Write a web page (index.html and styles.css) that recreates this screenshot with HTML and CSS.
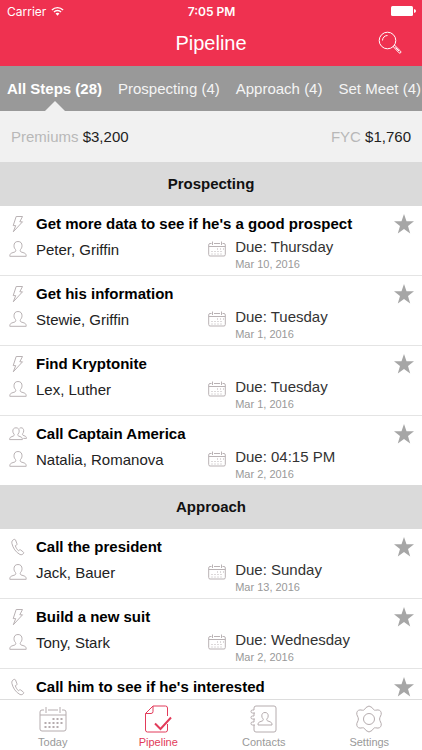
FILE: index.html
```html
<!DOCTYPE html>
<html lang="en">
<head>
    <meta charset="UTF-8">
    <meta name="viewport" content="width=device-width, initial-scale=1.0">
    <title>Pipeline</title>
    <link rel="stylesheet" href="styles.css">
</head>
<body>
    <svg class="icon-defs" aria-hidden="true">
        <symbol id="bolt" viewBox="0 0 18 18">
            <path d="M7.200 1.500h6.300l-2.700 5.300h2.700L4.300 16.800l2.400-6.200H4.200z"/>
        </symbol>
        <symbol id="person" viewBox="0 0 18 18">
            <path d="M9 1.500c-2.800 0-4 1.800-4 4.200 0 1.700.6 2.900 1.500 3.800.5.700.4 2-.5 2.400L2.700 13C1.200 13.500.8 14.700.8 16.300h16.400c0-1.600-.4-2.800-1.900-3.300L12 11.900c-.9-.4-1-1.700-.5-2.400.9-.9 1.500-2.100 1.500-3.800 0-2.400-1.200-4.200-4-4.200z"/>
        </symbol>
        <symbol id="people" viewBox="0 0 18 18">
            <path d="M7 2.800c-2.200 0-3.200 1.400-3.200 3.300 0 1.300.5 2.300 1.200 3 .5.700.3 1.500-.4 1.800L2 12C.9 12.500.6 13.400.6 14.600h12.800c0-1.200-.3-2.100-1.400-2.600l-2.600-1.100c-.7-.3-.9-1.100-.4-1.800.7-.7 1.200-1.700 1.200-3C10.200 4.200 9.200 2.800 7 2.800z"/>
            <path d="M10.500 3.300c.4-.3.900-.5 1.500-.5 1.900 0 2.700 1.300 2.700 3 0 1.200-.4 2.100-1 2.800-.5.700-.3 1.300.3 1.600l2.200 1c1 .4 1.300 1.200 1.300 2.200h-3.200"/>
        </symbol>
        <symbol id="phone" viewBox="0 0 18 18">
            <path d="M4.800 1.500C3.200 2.300 2.500 3.600 2.900 5.400c1 4.600 4 9 8.100 11.100 1.500.6 2.800.1 3.600-1.300.2-.4.100-.8-.2-1.100l-2.800-2.200c-.4-.3-.9-.2-1.200.1l-.9.800C8.200 11.600 7 9.900 6.300 7.700l1.200-.6c.4-.2.6-.7.500-1.200L6.500 1.900c-.3-.6-1-.7-1.700-.4z"/>
        </symbol>
        <symbol id="calendar" viewBox="0 0 28 26">
            <path d="M5 4H3Q1 4 1 6v17q0 2 2 2h22q2 0 2-2V6q0-2-2-2h-2M9 4h10M1 9h26M7 1v6M21 1v6"/>
            <path class="big-dots" d="M13.500 13h10.500M5.500 17h18.500M5.500 21h15"/>
        </symbol>
        <symbol id="small-calendar" viewBox="0 0 18 18">
            <path d="M3.500 3.500H2Q.7 3.500.7 5v9.500Q.7 16 2 16h14q1.300 0 1.300-1.500V5q0-1.500-1.300-1.500h-1.500M6 3.500h6M.7 6.500h16.600M4.500 1.500V5M13.500 1.500V5"/>
            <path class="dots" d="M9 9h7M3.500 11.500h12M3.500 14h10"/>
        </symbol>
        <symbol id="star" viewBox="0 0 20 20">
            <path d="M10 0l2.500 7.300h7.500l-6 4.700 2.200 7.600L10 15.100l-6.200 4.500L6 12 0 7.300h7.500z"/>
        </symbol>
        <symbol id="search" viewBox="0 0 24 24">
            <circle cx="9.500" cy="9.500" r="8.300"/>
            <path d="M4.500 9.500a5 5 0 0 1 5-5M15.300 15.700l1.400-1.400 5.900 5.900q.8.800 0 1.600t-1.600 0zM17.500 16.500l3.600 3.600"/>
        </symbol>
        <symbol id="pipeline" viewBox="0 0 28 28">
            <path d="M23.500 11V3q0-2-2-2H9L1.500 8.500V25q0 2 2 2h18q2 0 2-2v-6M9 1v5.500q0 2-2 2H1.500"/>
            <path class="check" d="M11 18.500l5.500 5.500L27 12.500"/>
        </symbol>
        <symbol id="contacts" viewBox="0 0 28 28">
            <path d="M4 5V3q0-2 2-2h18q2 0 2 2v22q0 2-2 2H6q-2 0-2-2v-2M4 8v3M4 14v3M4 20v1M4 5H2.500a1.500 1.500 0 0 0 0 3H5M4 11H2.500a1.500 1.500 0 0 0 0 3H5M4 17H2.500a1.500 1.500 0 0 0 0 3H5M4 21v2"/>
            <path d="M15 7.500c-2.300 0-3.200 1.500-3.200 3.400 0 1.300.5 2.300 1.300 3 .4.700.2 1.600-.6 1.900l-3 1.200c-1.200.5-1.500 1.500-1.500 3h14c0-1.500-.3-2.500-1.500-3l-3-1.200c-.8-.3-1-1.200-.6-1.900.8-.7 1.300-1.700 1.300-3 0-1.900-.9-3.400-3.200-3.400z"/>
        </symbol>
        <symbol id="settings" viewBox="0 0 28 28">
            <path d="M11 2.500Q14-.5 17 2.500l1.500 2q.8.900 2 .7l2.500-.3q3.700.5 3.200 4.600l-1.300 3q-.6 1.500 0 3l1.300 3q.5 4.100-3.200 4.600l-2.500-.3q-1.200-.2-2 .7l-1.500 2q-3 3-6 0l-1.500-2q-.8-.9-2-.7L5 23.100q-3.700-.5-3.200-4.600l1.300-3q.6-1.500 0-3l-1.300-3Q1.300 5.400 5 4.900l2.500.3q1.200.2 2-.7z"/>
            <circle cx="14" cy="14" r="5.500"/>
        </symbol>
    </svg>

    <header class="header">
        <div class="status-bar">
            <div class="carrier">
                <span>Carrier</span>
                <svg class="wifi" viewBox="0 0 14 10" aria-hidden="true">
                    <path d="M1 3.800a8.500 8.500 0 0 1 12 0M3.200 6a5.400 5.400 0 0 1 7.600 0"/>
                    <path class="wifi-dot" d="M7 10L4.900 7.800a3 3 0 0 1 4.200 0z"/>
                </svg>
            </div>
            <span class="clock">7:05 PM</span>
            <svg class="battery" viewBox="0 0 25 10" aria-hidden="true">
                <rect width="22" height="10" rx="1.500"/>
                <path d="M23 3q2 .5 2 2t-2 2z"/>
            </svg>
        </div>
        <div class="title-bar">
            <h1>Pipeline</h1>
            <button class="search-btn" type="button" aria-label="Search"><svg><use href="#search"/></svg></button>
        </div>
    </header>

    <nav class="steps">
        <a class="step active" href="#all">All Steps (28)</a>
        <a class="step" href="#prospecting">Prospecting (4)</a>
        <a class="step" href="#approach">Approach (4)</a>
        <a class="step" href="#set-meet">Set Meet (4)</a>
    </nav>

    <div class="summary">
        <div><span class="summary-label">Premiums</span> $3,200</div>
        <div><span class="summary-label">FYC</span> $1,760</div>
    </div>

    <main class="list">
        <section id="prospecting">
            <h2>Prospecting</h2>
            <article class="task">
                <svg class="icon"><use href="#bolt"/></svg>
                <h3>Get more data to see if he's a good prospect</h3>
                <button class="star-btn" type="button" aria-label="Star"><svg><use href="#star"/></svg></button>
                <svg class="icon"><use href="#person"/></svg>
                <div class="contact">Peter, Griffin</div>
                <svg class="icon"><use href="#small-calendar"/></svg>
                <div class="due">Due: Thursday<time>Mar 10, 2016</time></div>
            </article>
            <article class="task">
                <svg class="icon"><use href="#bolt"/></svg>
                <h3>Get his information</h3>
                <button class="star-btn" type="button" aria-label="Star"><svg><use href="#star"/></svg></button>
                <svg class="icon"><use href="#person"/></svg>
                <div class="contact">Stewie, Griffin</div>
                <svg class="icon"><use href="#small-calendar"/></svg>
                <div class="due">Due: Tuesday<time>Mar 1, 2016</time></div>
            </article>
            <article class="task">
                <svg class="icon"><use href="#bolt"/></svg>
                <h3>Find Kryptonite</h3>
                <button class="star-btn" type="button" aria-label="Star"><svg><use href="#star"/></svg></button>
                <svg class="icon"><use href="#person"/></svg>
                <div class="contact">Lex, Luther</div>
                <svg class="icon"><use href="#small-calendar"/></svg>
                <div class="due">Due: Tuesday<time>Mar 1, 2016</time></div>
            </article>
            <article class="task">
                <svg class="icon"><use href="#people"/></svg>
                <h3>Call Captain America</h3>
                <button class="star-btn" type="button" aria-label="Star"><svg><use href="#star"/></svg></button>
                <svg class="icon"><use href="#person"/></svg>
                <div class="contact">Natalia, Romanova</div>
                <svg class="icon"><use href="#small-calendar"/></svg>
                <div class="due">Due: 04:15 PM<time>Mar 2, 2016</time></div>
            </article>
        </section>
        <section id="approach">
            <h2>Approach</h2>
            <article class="task">
                <svg class="icon"><use href="#phone"/></svg>
                <h3>Call the president</h3>
                <button class="star-btn" type="button" aria-label="Star"><svg><use href="#star"/></svg></button>
                <svg class="icon"><use href="#person"/></svg>
                <div class="contact">Jack, Bauer</div>
                <svg class="icon"><use href="#small-calendar"/></svg>
                <div class="due">Due: Sunday<time>Mar 13, 2016</time></div>
            </article>
            <article class="task">
                <svg class="icon"><use href="#bolt"/></svg>
                <h3>Build a new suit</h3>
                <button class="star-btn" type="button" aria-label="Star"><svg><use href="#star"/></svg></button>
                <svg class="icon"><use href="#person"/></svg>
                <div class="contact">Tony, Stark</div>
                <svg class="icon"><use href="#small-calendar"/></svg>
                <div class="due">Due: Wednesday<time>Mar 2, 2016</time></div>
            </article>
            <article class="task">
                <svg class="icon"><use href="#phone"/></svg>
                <h3>Call him to see if he's interested</h3>
                <button class="star-btn" type="button" aria-label="Star"><svg><use href="#star"/></svg></button>
            </article>
        </section>
    </main>

    <nav class="tab-bar">
        <a class="tab" href="#today"><svg><use href="#calendar"/></svg>Today</a>
        <a class="tab active" href="#pipeline-tab"><svg><use href="#pipeline"/></svg>Pipeline</a>
        <a class="tab" href="#contacts-tab"><svg><use href="#contacts"/></svg>Contacts</a>
        <a class="tab" href="#settings-tab"><svg><use href="#settings"/></svg>Settings</a>
    </nav>
</body>
</html>
```

FILE: styles.css
```css
* {
    box-sizing: border-box;
}
body {
    margin: 0;
    height: 100vh;
    display: flex;
    flex-direction: column;
    overflow: hidden;
    font-family: "Liberation Sans", Arial, sans-serif;
    font-size: 15px;
    color: #222;
    background-color: #fff;
}
h1, h2, h3 {
    margin: 0;
}
a {
    text-decoration: none;
}
button {
    padding: 0;
    border: none;
    background: none;
    cursor: pointer;
}
svg {
    display: block;
    fill: none;
    stroke: currentColor;
}
.icon-defs {
    position: absolute;
    width: 0;
    height: 0;
}
.dots {
    stroke-dasharray: 1 2;
}
.big-dots {
    stroke-width: 2;
    stroke-dasharray: 2 2;
}
.header {
    flex: none;
    background-color: #ef3150;
    color: white;
}
.status-bar {
    display: grid;
    grid-template-columns: 1fr auto 1fr;
    align-items: center;
    height: 22px;
    padding: 0 6px 0 7px;
    font-family: Inter, "Liberation Sans", sans-serif;
    font-size: 12px;
}
.carrier {
    display: flex;
    align-items: center;
    gap: 5px;
}
.wifi {
    width: 13px;
    height: 10px;
    stroke-width: 1.5;
}
.wifi-dot {
    fill: currentColor;
    stroke: none;
}
.clock {
    font-weight: 600;
}
.battery {
    width: 25px;
    height: 10px;
    justify-self: end;
    fill: currentColor;
    stroke: none;
}
.title-bar {
    display: grid;
    grid-template-columns: 1fr auto 1fr;
    align-items: center;
    height: 44px;
    padding: 0 20px;
    padding-bottom: 2px;
}
.title-bar h1 {
    grid-column: 2;
    font-size: 20px;
    font-weight: 300;
}
.search-btn {
    justify-self: end;
    color: white;
}
.search-btn svg {
    width: 24px;
    height: 24px;
}
.steps {
    flex: none;
    display: flex;
    gap: 16px;
    height: 45px;
    padding-left: 7px;
    overflow: hidden;
    line-height: 45px;
    background-color: #999;
}
.step {
    flex: none;
    position: relative;
    color: #f4f4f4;
}
.step.active {
    font-weight: bold;
    color: white;
}
.step.active::after {
    content: "";
    position: absolute;
    left: 50%;
    bottom: 0;
    transform: translateX(-50%);
    border: 10px solid transparent;
    border-top: none;
    border-bottom-color: #f1f1f1;
}
.summary {
    flex: none;
    display: flex;
    justify-content: space-between;
    height: 51px;
    padding: 0 11px;
    line-height: 51px;
    background-color: #f1f1f1;
}
.summary-label {
    color: #b8b8b8;
}
.list {
    flex: 1;
    min-height: 0;
    overflow: auto;
    scrollbar-width: none;
}
.list h2 {
    font-size: 15px;
    line-height: 44px;
    text-align: center;
    color: #111;
    background-color: #dadada;
}
.task {
    display: grid;
    grid-template-columns: 18px 1fr 18px 37% 20px;
    grid-template-rows: 20px 36px;
    column-gap: 9px;
    padding: 8px 8px 5px 9px;
    border-bottom: 1px solid #e4e4e4;
}
.task:last-child {
    border-bottom: none;
}
.task h3 {
    grid-column: 2 / 5;
    font-size: 15px;
    line-height: 20px;
    white-space: nowrap;
    color: #000;
}
.icon {
    width: 18px;
    height: 18px;
    color: #b9b2b4;
}
.icon:first-child {
    margin-top: 1px;
}
.contact, .due {
    white-space: nowrap;
}
.contact {
    line-height: 32px;
}
.icon:not(:first-child) {
    margin-top: 6px;
}
.due {
    grid-column: 4 / 6;
    padding-top: 2px;
    line-height: 22px;
    color: #333;
}
.due time {
    display: block;
    font-size: 11px;
    line-height: 12px;
    color: #999;
}
.star-btn {
    color: #a6a6a6;
}
.star-btn svg {
    width: 20px;
    height: 20px;
    fill: currentColor;
    stroke: none;
}
.tab-bar {
    flex: none;
    display: flex;
    height: 51px;
    border-top: 1px solid #ddd;
    background-color: #fff;
}
.tab {
    flex: 1;
    display: flex;
    flex-direction: column;
    align-items: center;
    gap: 2px;
    padding-top: 5px;
    font-size: 11px;
    line-height: 14px;
    color: #999;
}
.tab svg {
    width: 28px;
    height: 28px;
    color: #b5acae;
}
.tab.active, .tab.active svg {
    color: #e23b5a;
}
.check {
    stroke-width: 2;
}
```
